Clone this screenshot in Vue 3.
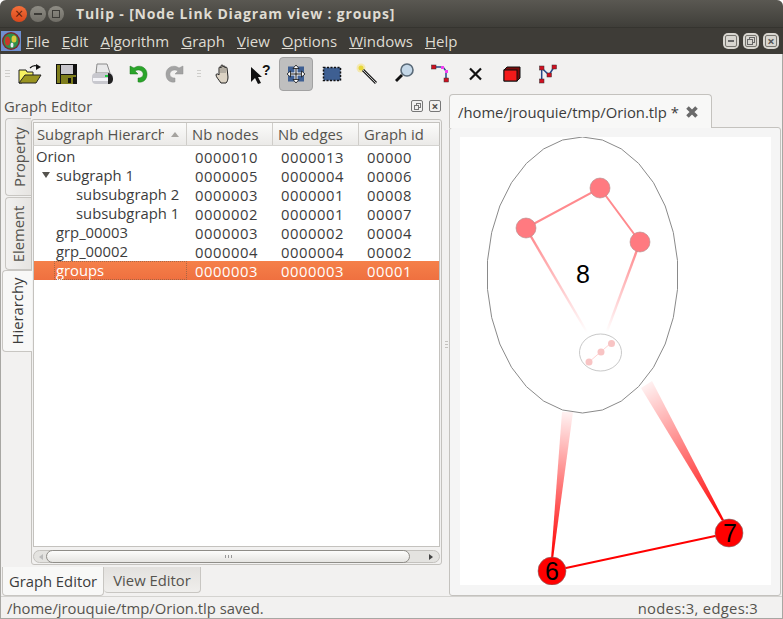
<template>
  <div class="window">
    <div class="titlebar">
      <div class="traffic">
        <span class="dot close">×</span>
        <span class="dot"><i class="dash"></i></span>
        <span class="dot"><i class="square"></i></span>
      </div>
      <span class="title">Tulip - [Node Link Diagram view : groups]</span>
    </div>
    <div class="menubar">
      <svg class="app-icon" width="20" height="20" viewBox="0 0 20 20">
        <rect width="20" height="20" fill="#6f8fd0" />
        <circle cx="10" cy="10" r="9" fill="#7a2a2a" />
        <circle cx="10" cy="10" r="7.500" fill="#2f8f4a" />
        <ellipse cx="6.500" cy="10" rx="2.500" ry="4.500" fill="#c8382b" />
        <ellipse cx="13" cy="8" rx="2.500" ry="3.500" fill="#dcc93c" />
        <ellipse cx="11" cy="14" rx="1.500" ry="2.500" fill="#e8e8f0" />
      </svg>
      <span v-for="m in menus" :key="m.rest" class="menu-item"><u>{{ m.key }}</u>{{ m.rest }}</span>
      <div class="mdi-buttons">
        <span class="mdi-btn"><i class="frame"><b class="glyph-min"></b></i></span>
        <span class="mdi-btn"><i class="frame"><b class="glyph-restore"></b></i></span>
        <span class="mdi-btn"><i class="frame x">×</i></span>
      </div>
    </div>
    <div class="body">
      <div class="toolbar">
        <span class="grip first"></span>
        <span class="cell">
          <svg width="24" height="24" viewBox="0 0 24 24">
            <path d="M1 8h7l1 2h6v4H8l-4 7H1z" fill="#f5f060" stroke="#222" />
            <path d="M1 21l6-8h16l-5 8z" fill="#9a9420" stroke="#222" />
            <path d="M12 6c2-2 4-3 7-2" fill="none" stroke="#111" stroke-width="1.200" />
            <path d="M18 2l5 3-5 3z" fill="#111" />
          </svg>
        </span>
        <span class="cell">
          <svg width="24" height="24" viewBox="0 0 24 24">
            <rect x="2" y="2" width="21" height="20" fill="#111" />
            <rect x="3" y="3" width="3" height="18" fill="#7e7d1c" />
            <rect x="7" y="3" width="12" height="9" fill="#c8c6cc" />
            <rect x="7" y="13" width="15" height="2" fill="#7e7d1c" />
            <rect x="7" y="15" width="12" height="7" fill="#7e7d1c" />
            <rect x="14" y="16" width="3" height="5" fill="#111" />
          </svg>
        </span>
        <span class="cell">
          <svg width="24" height="24" viewBox="0 0 24 24">
            <path d="M7 2h10l3 9H6z" fill="#e9e9ea" stroke="#8a8a8a" />
            <rect x="2" y="11" width="21" height="11" rx="4" fill="#c8c8ce" />
            <path d="M18 11c3 0 5 3 5 6s-2 5-5 5z" fill="#222" />
            <rect x="3" y="16" width="15" height="3" fill="#f4f4f8" />
            <rect x="15" y="13" width="3" height="2" fill="#22cc44" />
          </svg>
        </span>
        <span class="cell">
          <svg width="24" height="24" viewBox="0 0 24 24">
            <path d="M4 4v8h8L9 9c3-2 7-1 8 2 .8 3-1.500 5-5 5v4c6 1 9-3 9-8 0-7-8-10-13-6z" fill="#2aa52a" stroke="#1c7a1c" stroke-width=".5" />
          </svg>
        </span>
        <span class="cell">
          <svg width="24" height="24" viewBox="0 0 24 24">
            <path transform="translate(25,0) scale(-1,1)" d="M4 4v8h8L9 9c3-2 7-1 8 2 .8 3-1.500 5-5 5v4c6 1 9-3 9-8 0-7-8-10-13-6z" fill="#a3a3a3" stroke="#939393" stroke-width=".5" />
          </svg>
        </span>
        <span class="grip-cell"><span class="grip"></span></span>
        <span class="cell">
          <svg width="24" height="24" viewBox="0 0 24 24">
            <path d="M9 21c-2-3-5-6-5-8 0-1.500 2-1.500 3 0V6c0-1.500 2-1.500 2 0V4c0-1.500 2-1.500 2 0v1c0-1.500 2-1.500 2 0v1c0-1.500 2-1 2 0l1 9c0 3-1 5-2 6z" fill="#dcd3c4" stroke="#222" />
            <path d="M9 6v5M11 5v6M13 6v5" stroke="#555" stroke-width=".6" />
          </svg>
        </span>
        <span class="cell">
          <svg width="24" height="24" viewBox="0 0 24 24">
            <path d="M3 5v15l4-4 3 6 3-1-3-6h4z" fill="#111" />
            <text x="14" y="13" class="help-mark">?</text>
          </svg>
        </span>
        <span class="cell">
          <span class="tool-active">
            <svg width="20" height="20" viewBox="0 0 20 20">
              <rect x="2" y="2.500" width="16" height="15" fill="#3e5f92" />
              <path d="M10 3v14M3 10h14" stroke="#fff" stroke-width="3" />
              <path d="M10 3v14M3 10h14" stroke="#111" stroke-width="1" />
              <g fill="#fff" stroke="#111" stroke-width=".8">
                <path d="M10 1l3 3.500H7z" />
                <path d="M10 19l3-3.500H7z" />
                <path d="M1 10l3.500-3v6z" />
                <path d="M19 10l-3.500-3v6z" />
              </g>
            </svg>
          </span>
        </span>
        <span class="cell">
          <svg width="24" height="24" viewBox="0 0 24 24">
            <rect x="3.500" y="5.500" width="17" height="13" fill="#3e5f92" stroke="#111" stroke-width="1.500" stroke-dasharray="2 1.500" />
          </svg>
        </span>
        <span class="cell">
          <svg width="24" height="24" viewBox="0 0 24 24">
            <circle cx="5" cy="6" r="4.500" fill="#f4e8b0" />
            <circle cx="5" cy="6" r="2.500" fill="#e8d83a" />
            <path d="M7 8l13 13" stroke="#222" stroke-width="3" />
            <path d="M7 8l13 13" stroke="#c4c4c4" stroke-width="1" />
          </svg>
        </span>
        <span class="cell">
          <svg width="24" height="24" viewBox="0 0 24 24">
            <circle cx="15" cy="8" r="6" fill="#c5d8e8" stroke="#5a6a78" stroke-width="1.600" />
            <path d="M10 13l-6 6" stroke="#111" stroke-width="2.800" />
          </svg>
        </span>
        <span class="cell">
          <svg width="24" height="24" viewBox="0 0 24 24">
            <path d="M6 5h9l3 4v9" fill="none" stroke="#2a4a88" stroke-width="1.500" />
            <rect x="13" y="4" width="3" height="3" fill="#f040f0" />
            <rect x="17" y="8" width="3" height="3" fill="#f040f0" />
            <rect x="3.500" y="3" width="4.500" height="4" fill="#d01020" stroke="#333" stroke-width=".5" />
            <rect x="16" y="16" width="4.500" height="4" fill="#d01020" stroke="#333" stroke-width=".5" />
          </svg>
        </span>
        <span class="cell">
          <svg width="24" height="24" viewBox="0 0 24 24">
            <path d="M6 6.500l11 11M17 6.500l-11 11" stroke="#111" stroke-width="2.200" />
          </svg>
        </span>
        <span class="cell">
          <svg width="24" height="24" viewBox="0 0 24 24">
            <path d="M4 8l3-3h13v11l-3 3H4z" fill="#7a0a0a" stroke="#111" />
            <rect x="4" y="8" width="13" height="11" fill="#f41a1a" stroke="#111" />
          </svg>
        </span>
        <span class="cell">
          <svg width="24" height="24" viewBox="0 0 24 24">
            <path d="M5.700 6v12.700M5.700 6l7.300 7L18 5" stroke="#2a4a88" stroke-width="1.500" fill="none" />
            <g fill="#d01020" stroke="#333" stroke-width=".5">
              <rect x="3.500" y="4" width="4.500" height="4" />
              <rect x="16" y="3" width="4.500" height="4" />
              <rect x="11" y="11" width="4.500" height="4" />
              <rect x="3.500" y="17" width="4.500" height="4" />
            </g>
          </svg>
        </span>
      </div>
      <div class="workspace">
        <div class="left-dock">
          <div class="dock-head">
            <span>Graph Editor</span>
            <span class="dock-btns">
              <i class="small-btn"><b class="glyph-restore"></b></i>
              <i class="small-btn">×</i>
            </span>
          </div>
          <div class="dock-body">
            <div class="vtabs">
              <div class="vtab property"><span>Property</span></div>
              <div class="vtab element"><span>Element</span></div>
              <div class="vtab hierarchy"><span>Hierarchy</span></div>
            </div>
            <div class="tree-pane">
              <div class="tree-head">
                <div class="h-cell c1"><span class="clip">Subgraph Hierarch</span><i class="sort"></i></div>
                <div class="h-cell c2">Nb nodes</div>
                <div class="h-cell c3">Nb edges</div>
                <div class="h-cell c4">Graph id</div>
              </div>
              <div class="tree-rows">
                <div v-for="r in rows" :key="r.name" class="row" :class="{ selected: r.selected }">
                  <div class="c1 name" :style="{ paddingLeft: r.indent + 'px' }">
                    <i v-if="r.open" class="arrow"></i>
                    <i v-if="r.selected" class="focus"></i>
                    {{ r.name }}
                  </div>
                  <div class="c2 num">{{ r.nodes }}</div>
                  <div class="c3 num">{{ r.edges }}</div>
                  <div class="c4 num">{{ r.id }}</div>
                </div>
              </div>
              <div class="hscroll">
                <span class="sb-arrow left"></span>
                <div class="trough"><div class="thumb"><em></em></div></div>
                <span class="sb-arrow right"></span>
              </div>
            </div>
          </div>
          <div class="bottom-tabs">
            <div class="btab active">Graph Editor</div>
            <div class="btab">View Editor</div>
          </div>
        </div>
        <div class="splitter"><i></i></div>
        <div class="right-pane">
          <div class="doc-tab-row">
            <div class="doc-tab">
              <span>/home/jrouquie/tmp/Orion.tlp *</span>
              <svg width="14" height="14" viewBox="0 0 14 14"><path d="M2.500 2.500l9 9M11.500 2.500l-9 9" stroke="#6a6a6a" stroke-width="3.600" /></svg>
            </div>
          </div>
          <div class="doc-frame">
            <svg class="canvas" width="311" height="448" viewBox="460 137 311 448">
              <defs>
                <linearGradient id="e1" gradientUnits="userSpaceOnUse" x1="530" y1="235" x2="588" y2="332">
                  <stop offset="0" stop-color="#ff8a8e" /><stop offset="1" stop-color="#ff8a8e" stop-opacity="0" />
                </linearGradient>
                <linearGradient id="e2" gradientUnits="userSpaceOnUse" x1="637" y1="250" x2="606" y2="332">
                  <stop offset="0" stop-color="#ff8a8e" /><stop offset="1" stop-color="#ff8a8e" stop-opacity="0" />
                </linearGradient>
                <linearGradient id="e3" gradientUnits="userSpaceOnUse" x1="552" y1="558" x2="567" y2="412">
                  <stop offset="0" stop-color="#ff0000" /><stop offset="1" stop-color="#ff0000" stop-opacity=".05" />
                </linearGradient>
                <linearGradient id="e4" gradientUnits="userSpaceOnUse" x1="723" y1="521" x2="645" y2="384">
                  <stop offset="0" stop-color="#ff0000" /><stop offset="1" stop-color="#ff0000" stop-opacity=".05" />
                </linearGradient>
              </defs>
              <polygon :points="outerEllipse" fill="#fff" stroke="#8a8a8a" />
              <path d="M526 228L600 188L640 242" fill="none" stroke="#ff8a8e" stroke-width="2" />
              <path d="M526 228L588 334" fill="none" stroke="url(#e1)" stroke-width="2.400" />
              <path d="M640 242L606 334" fill="none" stroke="url(#e2)" stroke-width="2.400" />
              <circle cx="526" cy="228" r="10" fill="#ff7a80" stroke="#b08a8a" stroke-width=".6" />
              <circle cx="600" cy="188" r="10" fill="#ff7a80" stroke="#b08a8a" stroke-width=".6" />
              <circle cx="640" cy="242" r="10" fill="#ff7a80" stroke="#b08a8a" stroke-width=".6" />
              <text x="583" y="283" class="label big">8</text>
              <polygon :points="innerEllipse" fill="#fff" stroke="#c8c8c8" />
              <path d="M589 362L611 343" stroke="#ffd4d4" stroke-width="1" />
              <circle cx="589" cy="362" r="3.500" fill="#f8c4c4" />
              <circle cx="601" cy="352" r="3.500" fill="#f8c4c4" />
              <circle cx="611.500" cy="343.500" r="3.500" fill="#f8c4c4" />
              <path d="M551 559L562 412L573 412L553 559Z" fill="url(#e3)" />
              <path d="M722 521L641 388L652 381L724 520Z" fill="url(#e4)" />
              <path d="M552 571L729 533" stroke="#ff0000" stroke-width="2.200" />
              <circle cx="552" cy="571" r="14" fill="#ff0000" stroke="#777" stroke-width=".6" />
              <circle cx="729" cy="533" r="14" fill="#ff0000" stroke="#777" stroke-width=".6" />
              <text x="552" y="580" class="label">6</text>
              <text x="730" y="542" class="label">7</text>
            </svg>
          </div>
        </div>
      </div>
      <div class="statusbar">
        <span>/home/jrouquie/tmp/Orion.tlp saved.</span>
        <span class="status-right">nodes:3, edges:3</span>
      </div>
    </div>
  </div>
</template>

<script setup>
const menus = [
  { key: 'F', rest: 'ile' },
  { key: 'E', rest: 'dit' },
  { key: 'A', rest: 'lgorithm' },
  { key: 'G', rest: 'raph' },
  { key: 'V', rest: 'iew' },
  { key: 'O', rest: 'ptions' },
  { key: 'W', rest: 'indows' },
  { key: 'H', rest: 'elp' },
]

const rows = [
  { name: 'Orion', indent: 2, nodes: '0000010', edges: '0000013', id: '00000' },
  { name: 'subgraph 1', indent: 22, open: true, nodes: '0000005', edges: '0000004', id: '00006' },
  { name: 'subsubgraph 2', indent: 42, nodes: '0000003', edges: '0000001', id: '00008' },
  { name: 'subsubgraph 1', indent: 42, nodes: '0000002', edges: '0000001', id: '00007' },
  { name: 'grp_00003', indent: 22, nodes: '0000003', edges: '0000002', id: '00004' },
  { name: 'grp_00002', indent: 22, nodes: '0000004', edges: '0000004', id: '00002' },
  { name: 'groups', indent: 22, selected: true, nodes: '0000003', edges: '0000003', id: '00001' },
]

// the view draws its metanodes as polygons, not true ellipses
function ellipsePoints(cx, cy, rx, ry, n) {
  const pts = []
  for (let i = 0; i < n; i++) {
    const a = ((i + 0.5) / n) * Math.PI * 2
    pts.push((cx + rx * Math.cos(a)).toFixed(1) + ',' + (cy + ry * Math.sin(a)).toFixed(1))
  }
  return pts.join(' ')
}

const outerEllipse = ellipsePoints(582.5, 275, 95.5, 138, 30)
const innerEllipse = ellipsePoints(600.5, 352.5, 21, 18.5, 30)
</script>

<style>
html, body {
  margin: 0;
  background: #fff;
  overflow: hidden;
}
</style>

<style scoped>
.window {
  width: 783px;
  height: 619px;
  display: flex;
  flex-direction: column;
  font-family: "Open Sans", "Noto Sans", sans-serif;
  font-size: 14.8px;
  color: #3c3c3c;
  background: #f2f1f0;
  overflow: hidden;
  border-radius: 6px 6px 0 0;
}
.titlebar {
  height: 28px;
  flex: none;
  box-sizing: border-box;
  display: flex;
  align-items: center;
  background: linear-gradient(#5a5852, #3f3e39);
  border-bottom: 1px solid #35342f;
  padding-left: 11px;
}
.traffic {
  display: flex;
  gap: 2.5px;
  width: 65px;
}
.dot {
  width: 16px;
  height: 16px;
  border-radius: 50%;
  background: linear-gradient(#8f8d85, #6f6d66);
  color: #3c3b37;
  font-size: 14px;
  line-height: 15px;
  text-align: center;
  display: flex;
  align-items: center;
  justify-content: center;
}
.dot.close {
  background: linear-gradient(#f4703a, #d9481c);
  color: #5a1a08;
}
.dash {
  width: 8px;
  height: 2px;
  background: #3c3b37;
}
.square {
  width: 6px;
  height: 6px;
  border: 1px solid #3c3b37;
}
.title {
  font-weight: 700;
  font-size: 14px;
  color: #dfdbd2;
  letter-spacing: .83px;
  white-space: nowrap;
}
.menubar {
  height: 26px;
  flex: none;
  display: flex;
  align-items: center;
  background: #3e3c37;
  padding-left: 1px;
  color: #dfdbd2;
}
.app-icon {
  margin-right: 5px;
}
.menu-item {
  margin-right: 12px;
  font-size: 15px;
}
.mdi-buttons {
  margin-left: auto;
  margin-right: 4px;
  display: flex;
  gap: 4px;
}
.mdi-btn {
  width: 16px;
  height: 16px;
  box-sizing: border-box;
  border-radius: 5px;
  background: #d8d6d0;
  display: flex;
  align-items: center;
  justify-content: center;
}
.frame {
  width: 10px;
  height: 10px;
  border: 1px solid #77756f;
  border-radius: 2px;
  display: flex;
  align-items: center;
  justify-content: center;
  font-style: normal;
}
.frame.x {
  font-size: 13px;
  line-height: 10px;
  font-weight: 700;
  color: #555;
}
.glyph-min {
  width: 6px;
  height: 2px;
  background: #666;
}
.glyph-restore {
  display: block;
  width: 4px;
  height: 4px;
  border: 1px solid #666;
  box-shadow: 2px -2px 0 -1px #d8d6d0, 2px -2px 0 0 #666;
  margin: 2px 2px 0 0;
}
.body {
  flex: 1;
  min-height: 0;
  display: flex;
  flex-direction: column;
  border-left: 1px solid #a8a7a3;
  border-right: 1px solid #a8a7a3;
  border-bottom: 1px solid #a8a7a3;
}
.toolbar {
  height: 40px;
  flex: none;
  display: flex;
  align-items: center;
  padding-left: 4px;
}
.grip {
  width: 4px;
  height: 8px;
  background: repeating-linear-gradient(#cfcecb 0 1px, transparent 1px 3px);
}
.grip.first {
  width: 5px;
  margin-right: 2px;
}
.grip-cell {
  width: 14px;
  flex: none;
  display: flex;
  justify-content: center;
}
.cell {
  width: 36px;
  flex: none;
  display: flex;
  align-items: center;
  justify-content: center;
}
.cell svg {
  display: block;
}
.tool-active {
  width: 34px;
  height: 34px;
  display: flex;
  align-items: center;
  justify-content: center;
  background: #bfbfbf;
  border: 1px solid #a2a2a2;
  border-radius: 4px;
  box-sizing: border-box;
}
.help-mark {
  font-family: "Liberation Sans", sans-serif;
  font-weight: 700;
  font-size: 14px;
  fill: #111;
}
.workspace {
  flex: 1;
  min-height: 0;
  display: flex;
}
.left-dock {
  width: 442px;
  flex: none;
  display: flex;
  flex-direction: column;
}
.dock-head {
  height: 24px;
  flex: none;
  display: flex;
  align-items: center;
  justify-content: space-between;
  padding: 0 2px 0 3px;
  color: #55534e;
}
.dock-btns {
  display: flex;
  gap: 6px;
}
.small-btn {
  width: 10px;
  height: 10px;
  border: 1px solid #777;
  border-radius: 2px;
  font-style: normal;
  font-weight: 700;
  font-size: 12px;
  line-height: 9px;
  display: flex;
  align-items: center;
  justify-content: center;
}
.small-btn .glyph-restore {
  border-color: #777;
  width: 3px;
  height: 3px;
  box-shadow: 2px -2px 0 -1px #f2f1f0, 2px -2px 0 0 #777;
}
.dock-body {
  flex: 1;
  min-height: 0;
  display: flex;
  padding-left: 1px;
}
.vtabs {
  width: 29px;
  flex: none;
  display: flex;
  flex-direction: column;
}
.vtab {
  box-sizing: border-box;
  margin-left: 3px;
  border: 1px solid #c8c6c2;
  border-right: none;
  border-radius: 4px 0 0 4px;
  background: linear-gradient(to right, #f2f1f0, #e6e4e1);
  display: flex;
  align-items: center;
  justify-content: center;
}
.vtab span {
  transform: rotate(-90deg);
  white-space: nowrap;
  color: #55534e;
}
.vtab.property {
  height: 78px;
  margin-bottom: 1px;
}
.vtab.element {
  height: 73px;
}
.vtab.hierarchy {
  height: 82px;
  margin-left: 0;
  margin-right: -1px;
  background: #f8f8f7;
  position: relative;
  z-index: 1;
}
.vtab.hierarchy span {
  color: #3c3c3c;
}
.tree-pane {
  box-sizing: border-box;
  width: 411px;
  margin: 1px 0 2px;
  border: 1px solid #c4c2be;
  border-radius: 3px;
  padding: 2px 1px 1px;
  display: flex;
  flex-direction: column;
}
.tree-head {
  height: 24px;
  flex: none;
  display: flex;
  border: 1px solid #c4c2be;
  border-bottom-color: #d4d3d0;
  box-sizing: border-box;
  background: linear-gradient(#fbfbfa, #ebeae8);
  color: #55534e;
}
.h-cell {
  display: flex;
  align-items: center;
  padding-left: 5px;
  box-sizing: border-box;
  border-right: 1px solid #cfcdc9;
  white-space: nowrap;
  overflow: hidden;
}
.h-cell.c1 {
  padding-left: 3px;
}
.h-cell:last-child {
  border-right: none;
}
.clip {
  width: 127px;
  overflow: hidden;
}
.sort {
  margin-left: 7px;
  border-left: 4px solid transparent;
  border-right: 4px solid transparent;
  border-bottom: 5px solid #a5a39f;
}
.c1 { width: 153px; flex: none; }
.c2 { width: 86px; flex: none; }
.c3 { width: 86px; flex: none; }
.c4 { flex: 1; }
.tree-rows {
  flex: 1;
  min-height: 0;
  background: #fff;
  border-left: 1px solid #c4c2be;
  border-right: 1px solid #c4c2be;
  border-bottom: 1px solid #c4c2be;
  padding-top: 1px;
}
.row {
  height: 19px;
  display: flex;
  align-items: center;
  white-space: nowrap;
}
.row.selected {
  background: linear-gradient(#f58049, #ef7040);
  color: #fff;
}
.name {
  position: relative;
  box-sizing: border-box;
  height: 19px;
  line-height: 19px;
}
.focus {
  position: absolute;
  left: 20px;
  right: 0;
  top: 0;
  bottom: 0;
  border: 1px dotted rgba(120, 90, 70, .6);
}
.arrow {
  position: absolute;
  left: 8px;
  top: 6px;
  border-left: 4px solid transparent;
  border-right: 4px solid transparent;
  border-top: 6px solid #55534e;
}
.num {
  padding-left: 8px;
  box-sizing: border-box;
  letter-spacing: .55px;
}
.hscroll {
  height: 13px;
  flex: none;
  margin-top: 3px;
  border: 1px solid #c4c2be;
  border-radius: 7px;
  box-sizing: border-box;
  background: #e4e3e0;
  display: flex;
  align-items: center;
}
.sb-arrow {
  width: 12px;
  flex: none;
  display: flex;
}
.sb-arrow.left::before {
  content: "";
  margin-left: 5px;
  border-top: 3px solid transparent;
  border-bottom: 3px solid transparent;
  border-right: 4px solid #bbb;
}
.sb-arrow.right::before {
  content: "";
  margin-left: 2px;
  border-top: 3px solid transparent;
  border-bottom: 3px solid transparent;
  border-left: 4px solid #444;
}
.trough {
  flex: 1;
  height: 13px;
  margin: -1px 0;
}
.thumb {
  width: 364px;
  height: 13px;
  box-sizing: border-box;
  border: 1px solid #8f8d88;
  border-radius: 7px;
  background: linear-gradient(#fdfdfc, #e6e5e2);
  display: flex;
  align-items: center;
  justify-content: center;
}
.thumb em {
  width: 7px;
  height: 3px;
  background: repeating-linear-gradient(to right, #999 0 1px, transparent 1px 3px);
}
.bottom-tabs {
  height: 29px;
  flex: none;
  display: flex;
  padding-left: 1px;
}
.btab {
  box-sizing: border-box;
  width: 97px;
  height: 26px;
  display: flex;
  align-items: center;
  justify-content: center;
  border: 1px solid #c8c6c2;
  border-top: none;
  border-left: none;
  border-radius: 0 0 4px 4px;
  background: linear-gradient(#e3e1de, #efeeec);
  color: #55534e;
  white-space: nowrap;
}
.btab.active {
  width: 102px;
  height: 29px;
  background: #f8f8f7;
  border-left: 1px solid #c8c6c2;
  color: #3c3c3c;
}
.splitter {
  width: 6px;
  flex: none;
  display: flex;
  align-items: center;
  justify-content: center;
}
.splitter i {
  width: 3px;
  height: 9px;
  background: repeating-linear-gradient(#c4c2be 0 1px, transparent 1px 3px);
}
.right-pane {
  flex: 1;
  min-width: 0;
  display: flex;
  flex-direction: column;
  margin-right: 1px;
}
.doc-tab-row {
  height: 34px;
  flex: none;
  display: flex;
  position: relative;
  z-index: 1;
  margin-bottom: -1px;
}
.doc-tab {
  box-sizing: border-box;
  width: 263px;
  height: 34px;
  display: flex;
  align-items: center;
  gap: 6px;
  padding-left: 8px;
  background: #f8f8f7;
  border: 1px solid #c4c2be;
  border-bottom: none;
  border-radius: 4px 4px 0 0;
  white-space: nowrap;
}
.doc-frame {
  flex: 1;
  min-height: 0;
  border: 1px solid #c4c2be;
  border-radius: 3px;
  background: #f5f5f5;
  padding: 9px 10px 0;
  box-sizing: border-box;
}
.canvas {
  display: block;
  background: #fff;
}
.label {
  font-family: "Liberation Sans", sans-serif;
  font-size: 25px;
  fill: #000;
  text-anchor: middle;
}
.statusbar {
  height: 22px;
  flex: none;
  box-sizing: border-box;
  display: flex;
  align-items: center;
  justify-content: space-between;
  padding: 0 24px 0 6px;
  border-top: 1px solid #d4d3d0;
  color: #55534e;
  white-space: nowrap;
}
.status-right {
  letter-spacing: .3px;
}
</style>
